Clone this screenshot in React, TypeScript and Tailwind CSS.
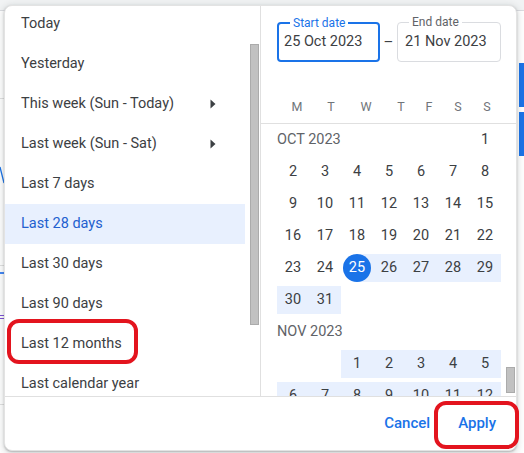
import React from "react";

type Cell = { d: number; band?: "full" | "start"; sel?: boolean } | null;

const Triangle = () => (
  <svg width="6" height="10" viewBox="0 0 6 10" className="block">
    <path d="M0.5 0.5 L5.5 5 L0.5 9.5 Z" fill="#3c4043" />
  </svg>
);

const items: { label: string; arrow?: boolean; selected?: boolean }[] = [
  { label: "Today" },
  { label: "Yesterday" },
  { label: "This week (Sun - Today)", arrow: true },
  { label: "Last week (Sun - Sat)", arrow: true },
  { label: "Last 7 days" },
  { label: "Last 28 days", selected: true },
  { label: "Last 30 days" },
  { label: "Last 90 days" },
  { label: "Last 12 months" },
  { label: "Last calendar year" },
  { label: "Last 6 months" },
];

const weekdays = ["M", "T", "W", "T", "F", "S", "S"];

const range = (a: number, b: number, band?: "full"): Cell[] => {
  const out: Cell[] = [];
  for (let i = a; i <= b; i++) out.push({ d: i, band });
  return out;
};

const octRows: Cell[][] = [
  range(2, 8),
  range(9, 15),
  range(16, 22),
  [
    { d: 23 },
    { d: 24 },
    { d: 25, band: "start", sel: true },
    { d: 26, band: "full" },
    { d: 27, band: "full" },
    { d: 28, band: "full" },
    { d: 29, band: "full" },
  ],
  [{ d: 30, band: "full" }, { d: 31, band: "full" }, null, null, null, null, null],
];

const novRows: Cell[][] = [
  [null, null, ...range(1, 5, "full")],
  range(6, 12, "full"),
  range(13, 19, "full"),
];

function DayCell({ c }: { c: Cell }) {
  if (!c) return <div className="h-8 w-8" />;
  const bandCls =
    c.band === "full"
      ? "bg-[#e8f0fe]"
      : c.band === "start"
      ? "bg-[linear-gradient(to_right,transparent_50%,#e8f0fe_50%)]"
      : "";
  return (
    <div className="h-8 w-8 py-[2px]">
      <div className={`h-7 w-8 flex items-center justify-center ${bandCls}`}>
        {c.sel ? (
          <div className="h-7 w-7 rounded-full bg-[#1a73e8] text-white flex items-center justify-center">
            {c.d}
          </div>
        ) : (
          <span>{c.d}</span>
        )}
      </div>
    </div>
  );
}

function WeekRow({ row }: { row: Cell[] }) {
  return (
    <div className="flex">
      {row.map((c, i) => (
        <DayCell key={i} c={c} />
      ))}
    </div>
  );
}

export default function App() {
  return (
    <div className="relative w-[524px] h-[453px] overflow-hidden bg-white font-['Roboto',sans-serif]">
      {/* background page fragments */}
      <div className="absolute left-0 top-0 w-full h-[10px] bg-[#f1f3f4]" />
      <div className="absolute left-0 top-[10px] w-full h-px bg-[#dadce0]" />
      <div className="absolute left-0 top-[98px] w-[5px] h-px bg-[#e0e0e0]" />
      <div className="absolute left-0 top-[265px] w-[5px] h-px bg-[#e0e0e0]" />
      <div className="absolute left-0 top-[272px] w-[5px] h-[2px] bg-[#4285f4]" />
      <div className="absolute left-0 top-[315px] w-[5px] h-px bg-[#7b4fd6]" />
      <div className="absolute left-0 top-[318px] w-[5px] h-px bg-[#7b4fd6]" />
      <div className="absolute left-0 top-[404px] w-[5px] h-px bg-[#e0e0e0]" />
      <svg className="absolute left-0 top-[166px]" width="5" height="18" viewBox="0 0 5 18">
        <path d="M0 1 L4 17" stroke="#1a73e8" strokeWidth="1.3" fill="none" />
      </svg>
      <div className="absolute left-[519px] top-[63px] w-[5px] h-[44px] bg-[#1a73e8]" />
      <div className="absolute left-[519px] top-[112px] w-[5px] h-[44px] bg-[#1a73e8]" />

      {/* popup card */}
      <div className="absolute left-[4px] top-[5px] w-[513px] h-[446px] rounded-lg border border-[#e3e3e3] bg-white shadow-[0_1px_2px_rgba(60,64,67,0.3),0_2px_6px_2px_rgba(60,64,67,0.15)] flex flex-col overflow-hidden">
        <div className="flex h-[390px]">
          {/* left list */}
          <div className="w-[256px] flex border-r border-[#e0e0e0]">
            <div className="w-[240px] overflow-hidden">
              <div className="-mt-[2px]">
                {items.map((it) => (
                  <div
                    key={it.label}
                    className={`h-10 flex items-center pl-4 text-[14.5px] ${
                      it.selected ? "bg-[#e8f0fe] text-[#2360cf]" : "text-[#3c4043]"
                    }`}
                  >
                    <span>{it.label}</span>
                    {it.arrow && (
                      <span className="ml-auto mr-[29px]">
                        <Triangle />
                      </span>
                    )}
                  </div>
                ))}
              </div>
            </div>
            <div className="w-[15px]">
              <div className="ml-[5px] mt-[38px] w-[9px] h-[281px] bg-[#c1c1c1] border border-[#ababab]" />
            </div>
          </div>

          {/* right calendar */}
          <div className="w-[255px] flex flex-col">
            <div className="pt-4 pl-4 flex items-center">
              <div className="relative w-[103px] h-10 rounded-[4px] border-2 border-[#1a73e8] flex items-center pl-[5px] text-[14.5px] text-[#3c4043]">
                <span className="absolute left-[11px] -top-[9px] px-[3px] bg-white text-[12px] leading-4 text-[#1a73e8]">
                  Start date
                </span>
                25 Oct 2023
              </div>
              <div className="w-[17px] text-center text-[15px] text-[#3c4043]">–</div>
              <div className="relative w-[104px] h-10 rounded-[4px] border border-[#dadce0] flex items-center pl-[7px] text-[14.5px] text-[#3c4043]">
                <span className="absolute left-[11px] -top-[9px] px-[3px] bg-white text-[12px] leading-4 text-[#5f6368]">
                  End date
                </span>
                21 Nov 2023
              </div>
            </div>

            <div className="pt-[35px] pb-[6px] border-b border-[#e0e0e0]">
              <div className="ml-[19px] grid grid-cols-[34px_34px_36px_34px_22px_36px_22px] h-5 items-center text-[12.5px] text-[#70757a]">
                {weekdays.map((w, i) => (
                  <div key={i} className="text-center">
                    {w}
                  </div>
                ))}
              </div>
            </div>

            <div className="flex-1 flex overflow-hidden">
              <div className="w-[240px] pl-4 text-[14.5px] text-[#3c4043]">
                <div className="flex h-8 items-center">
                  <div className="flex-1 text-[#5f6368]">OCT 2023</div>
                  <DayCell c={{ d: 1 }} />
                </div>
                {octRows.map((r, i) => (
                  <WeekRow key={i} row={r} />
                ))}
                <div className="h-8 flex items-center text-[#5f6368]">NOV 2023</div>
                {novRows.map((r, i) => (
                  <WeekRow key={i} row={r} />
                ))}
              </div>
              <div className="ml-auto w-[15px]">
                <div className="ml-[5px] mt-[243px] w-[9px] h-[26px] bg-[#c1c1c1] border border-[#ababab]" />
              </div>
            </div>
          </div>
        </div>

        {/* footer */}
        <div className="flex-1 border-t border-[#e0e0e0] flex items-center justify-end pr-[12px] gap-[12px]">
          <button className="h-9 px-2 text-[15px] font-medium text-[#1a73e8]">Cancel</button>
          <button className="h-9 px-2 text-[15px] font-medium text-[#1a73e8]">Apply</button>
        </div>
      </div>

      {/* red annotations */}
      <div className="absolute left-[7px] top-[319px] w-[131px] h-[45px] rounded-[12px] border-[4px] border-[#e3141e] z-10" />
      <div className="absolute left-[434px] top-[401px] w-[85px] h-[48px] rounded-[12px] border-[4px] border-[#e3141e] z-10" />
    </div>
  );
}
